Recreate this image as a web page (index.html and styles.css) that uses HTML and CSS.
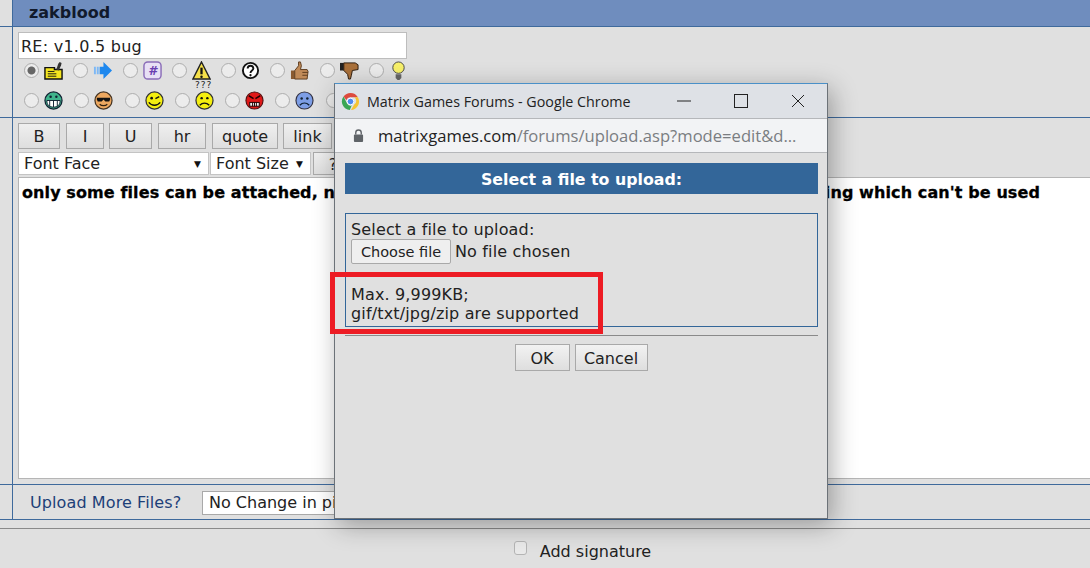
FILE: index.html
```html
<!DOCTYPE html>
<html lang="en">
<head>
<meta charset="utf-8">
<title>Upload</title>
<link rel="stylesheet" href="styles.css">
</head>
<body>
<div class="page">
  <div class="row row-head"><div class="gutter"></div><div class="cell head">zakblood</div></div>
  <div class="row row-subject">
    <div class="gutter"></div>
    <div class="cell subject">
      <input class="subject-input" type="text" value="RE: v1.0.5 bug">
      <div class="icons icons-one">
        <label class="pick"><input type="radio" name="ic" checked>
          <svg viewBox="0 0 20 20"><path d="M1 7h10v2h8v10H1z" fill="#f4e51e" stroke="#111" stroke-width="1.500"/><path d="M4 11h7M4 13.500h9M4 16h9" stroke="#111"/><path d="M13 9l2-6 1.500-2 2 1-.5 2.500-2.500 5.500z" fill="#333"/></svg></label>
        <label class="pick"><input type="radio" name="ic">
          <svg viewBox="0 0 20 20"><path d="M1 6h2v8H1zM4 6h2v8H4z" fill="#7db8f5"/><path d="M7 6h4V1l9 9-9 9v-5H7z" fill="#1e88ee"/></svg></label>
        <label class="pick"><input type="radio" name="ic">
          <svg viewBox="0 0 20 20"><rect x="1" y="1" width="18" height="18" rx="4" fill="#e8e0f5" stroke="#8a6cb8" stroke-width="1.500"/><text x="10" y="15" class="hash">#</text></svg></label>
        <label class="pick"><input type="radio" name="ic">
          <svg viewBox="0 0 20 20"><path d="M10 1l9 18H1z" fill="#f5e04a" stroke="#222" stroke-width="1.500"/><path d="M10 7v7" stroke="#111" stroke-width="2.400"/><circle cx="10" cy="16.500" r="1.300" fill="#111"/></svg></label>
        <label class="pick"><input type="radio" name="ic">
          <svg viewBox="0 0 20 20"><circle cx="10" cy="10" r="8" fill="#fff" stroke="#111" stroke-width="2"/><path d="M7 8c0-4 6-4 6 0 0 2-3 2-3 4.500" fill="none" stroke="#111" stroke-width="2"/><circle cx="10" cy="15" r="1.200" fill="#111"/></svg></label>
        <label class="pick"><input type="radio" name="ic">
          <svg viewBox="0 0 20 20"><path d="M1 10h4v9H1z" fill="#8a5a30"/><path d="M5 10l4-5V1h2l1 4-1 4h7l1 2-1 8H5z" fill="#c08a58" stroke="#5b3a1c"/><path d="M13 12h6M13 15h5" stroke="#5b3a1c"/></svg></label>
        <label class="pick"><input type="radio" name="ic">
          <svg viewBox="0 0 20 20"><path d="M0 2h4v8H0z" fill="#222"/><path d="M4 2h12l3 2v5l-6 1-1 5-1 4H9l-1-5-4-4z" fill="#a9703a" stroke="#2b1a0c"/></svg></label>
        <label class="pick"><input type="radio" name="ic">
          <svg viewBox="0 0 20 20"><circle cx="10" cy="7" r="6" fill="#f7f06a" stroke="#444"/><path d="M7 14h6v4l-2 2H9l-2-2z" fill="#666"/></svg></label>
      </div>
      <div class="icons icons-two">
        <label class="pick"><input type="radio" name="ic">
          <svg viewBox="0 0 20 20"><circle cx="10" cy="10" r="9" fill="#3fb48c" stroke="#123" stroke-width="1.300"/><path d="M3 10h14c0 5-3 7-7 7s-7-2-7-7z" fill="#fff" stroke="#123"/><path d="M6 10v6M10 10v7M14 10v6" stroke="#123"/><circle cx="7" cy="6" r="1.300" fill="#123"/><circle cx="13" cy="6" r="1.300" fill="#123"/></svg></label>
        <label class="pick"><input type="radio" name="ic">
          <svg viewBox="0 0 20 20"><circle cx="10" cy="10" r="9" fill="#eda860" stroke="#432" stroke-width="1.300"/><path d="M3 7h14v2l-1 2h-4l-2-2-2 2H4L3 9z" fill="#111"/><path d="M6 14c2 2 6 2 8 0" fill="none" stroke="#321" stroke-width="1.300"/></svg></label>
        <label class="pick"><input type="radio" name="ic">
          <svg viewBox="0 0 20 20"><circle cx="10" cy="10" r="9" fill="#f4ee10" stroke="#333" stroke-width="1.300"/><circle cx="7" cy="7.500" r="1.400" fill="#111"/><path d="M11 8l4-2" stroke="#111" stroke-width="1.500"/><path d="M4 12c3 4 9 4 12 0" fill="none" stroke="#111" stroke-width="1.500"/></svg></label>
        <label class="pick"><input type="radio" name="ic">
          <span class="query"><span class="marks">???</span>
          <svg viewBox="0 0 20 20"><circle cx="10" cy="10" r="9" fill="#f4ee10" stroke="#333" stroke-width="1.300"/><circle cx="7" cy="7.500" r="1.300" fill="#111"/><circle cx="13" cy="7.500" r="1.300" fill="#111"/><path d="M5 15c3-3 7-3 10 0" fill="none" stroke="#111" stroke-width="1.500"/></svg></span></label>
        <label class="pick"><input type="radio" name="ic">
          <svg viewBox="0 0 20 20"><circle cx="10" cy="10" r="9" fill="#e01818" stroke="#511" stroke-width="1.200"/><path d="M4 5l5 3M16 5l-5 3" stroke="#200" stroke-width="1.600"/><rect x="5" y="12" width="10" height="4" fill="#eee" stroke="#200"/><path d="M8 12v4M10 12v4M12 12v4" stroke="#200"/></svg></label>
        <label class="pick"><input type="radio" name="ic">
          <svg viewBox="0 0 20 20"><circle cx="10" cy="10" r="9" fill="#7d9ee6" stroke="#334" stroke-width="1.200"/><circle cx="7" cy="8" r="1.300" fill="#123"/><circle cx="13" cy="8" r="1.300" fill="#123"/><path d="M5 15c3-3 7-3 10 0" fill="none" stroke="#123" stroke-width="1.400"/></svg></label>
        <label class="pick"><input type="radio" name="ic"></label>
      </div>
    </div>
  </div>
  <div class="row row-editor">
    <div class="gutter"></div>
    <div class="cell editor">
      <div class="tools">
        <button class="tool tool-b">B</button>
        <button class="tool tool-i">I</button>
        <button class="tool tool-u">U</button>
        <button class="tool tool-hr">hr</button>
        <button class="tool tool-quote">quote</button>
        <button class="tool tool-link">link</button>
      </div>
      <div class="selects">
        <div class="drop drop-face">Font Face<span class="caret">▼</span></div>
        <div class="drop drop-size">Font Size<span class="caret">▼</span></div>
        <button class="tool tool-help">?</button>
      </div>
      <div class="body-text">
        <span>only some files can be attached, n</span>
        <span>ing which can't be used</span>
      </div>
    </div>
  </div>
  <div class="row row-upload">
    <div class="gutter"></div>
    <div class="cell upload">
      <span class="upload-label">Upload More Files?</span>
      <div class="drop drop-pic">No Change in pic</div>
    </div>
  </div>
  <div class="rule"></div>
  <div class="signature">
    <input class="sig-check" type="checkbox">
    <span>Add signature</span>
  </div>

  <div class="window">
    <div class="titlebar">
      <svg class="chrome-logo" viewBox="0 0 20 20">
        <path d="M10 1a9 9 0 0 1 7.800 4.500H10a4.500 4.500 0 0 0-4.300 3.100L2.700 4.700A9 9 0 0 1 10 1z" fill="#dd4b3e"/>
        <path d="M17.800 5.500A9 9 0 0 1 10.500 19l3.400-5.800a4.500 4.500 0 0 0 0-7.700z" fill="#f5c431"/>
        <path d="M2.700 4.700L6.500 12.300a4.500 4.500 0 0 0 4.700 2L9.300 19A9 9 0 0 1 2.700 4.700z" fill="#3aa655"/>
        <circle cx="10" cy="10" r="3.500" fill="#4d8bf0" stroke="#fff"/>
      </svg>
      <span class="win-title">Matrix Games Forums - Google Chrome</span>
      <div class="win-controls">
        <svg class="ctl" viewBox="0 0 14 14"><path d="M0 7h14" stroke="#222"/></svg>
        <svg class="ctl" viewBox="0 0 14 14"><rect x="0.500" y="0.500" width="13" height="13" fill="none" stroke="#222"/></svg>
        <svg class="ctl" viewBox="0 0 14 14"><path d="M1 1l12 12M13 1L1 13" stroke="#222"/></svg>
      </div>
    </div>
    <div class="urlbar">
      <svg class="lock" viewBox="0 0 12 14"><path d="M3 6V4a3 3 0 0 1 6 0v2" fill="none" stroke="#5f6368" stroke-width="1.500"/><rect x="1" y="6" width="10" height="8" rx="1" fill="#5f6368"/></svg>
      <span class="url"><span class="url-host">matrixgames.com</span>/forums/upload.asp?mode=edit&amp;d...</span>
    </div>
    <div class="win-body">
      <div class="banner">Select a file to upload:</div>
      <div class="file-box">
        <div>Select a file to upload:</div>
        <div class="file-row"><button class="choose">Choose file</button><span>No file chosen</span></div>
        <div class="limits">Max. 9,999KB;<br>gif/txt/jpg/zip are supported</div>
      </div>
      <div class="win-rule"></div>
      <div class="actions">
        <button class="act act-ok">OK</button>
        <button class="act act-cancel">Cancel</button>
      </div>
    </div>
  </div>
  <div class="mark"></div>
</div>
</body>
</html>
```
FILE: styles.css
```css
* { box-sizing: border-box; }
html, body { margin: 0; padding: 0; }
body { background: #e0e0e0; font-family: "DejaVu Sans", Verdana, sans-serif; font-size: 16px; color: #222; }
.page { position: relative; width: 1090px; height: 568px; overflow: hidden; background: #e0e0e0; }

.row { display: flex; border-bottom: 1px solid #3f6a9c; }
.gutter { width: 13px; flex: none; border-right: 1px solid #3f6a9c; }
.cell { flex: 1; min-width: 0; }
.row-head { height: 27px; }
.row-subject { height: 91px; }
.row-editor { height: 367px; }
.row-upload { height: 35px; }

.head { background: #6f8dbe; padding: 3px 0 0 16px; font-weight: bold; font-size: 16px; line-height: 20px; color: #111a2c; }

.subject { padding: 5px 0 0 5px; }
.subject-input { display: block; width: 389px; height: 27px; padding: 1px 2px 0; border: 1px solid #bdbdbd; background: #fff; font: 16px "DejaVu Sans", sans-serif; letter-spacing: .25px; color: #222; outline: none; }
.icons { display: flex; align-items: center; }
.icons-one { margin: 2px 0 0 6px; gap: 5.300px; }
.icons-two { margin: 11px 0 0 6px; gap: 6.300px; }
.pick { display: flex; align-items: center; gap: 5px; width: 44px; flex: none; }
.pick input { appearance: none; width: 15px; height: 15px; margin: 0; flex: none; border: 1px solid #adadad; border-radius: 50%; background: #ececec; }
.pick input:checked { background: radial-gradient(circle, #666 0 3.500px, #ececec 4.500px); }
.pick svg { width: 19px; height: 19px; flex: none; display: block; }
.hash { font: italic bold 13px "DejaVu Sans", sans-serif; fill: #6a3fb0; text-anchor: middle; }
.query { position: relative; display: block; width: 19px; height: 19px; }
.marks { position: absolute; left: 0; top: -11px; font-size: 9px; line-height: 10px; letter-spacing: 1px; color: #222; }

.editor { padding: 5px 0 5px 5px; display: flex; flex-direction: column; }
.tools { display: flex; height: 26px; }
.tool { height: 26px; padding: 1px 0 0; border: 1px solid #a9a9a9; background: linear-gradient(#efefef, #dedede); font: 16px "DejaVu Sans", sans-serif; color: #222; }
.tool-b { width: 42px; margin-right: 6px; }
.tool-i { width: 38px; margin-right: 5px; }
.tool-u { width: 43px; margin-right: 6px; }
.tool-hr { width: 48px; margin-right: 6px; }
.tool-quote { width: 66px; margin-right: 5px; }
.tool-link { width: 49px; }
.selects { display: flex; margin-top: 3px; height: 23px; }
.drop { display: flex; align-items: center; justify-content: space-between; background: #fff; border: 1px solid #c4c4c4; font-size: 16px; color: #222; }
.drop-face { width: 191px; padding: 0 7px 0 5px; }
.drop-size { width: 101px; margin-left: 1px; padding: 0 7px 0 5px; }
.caret { font-size: 9px; color: #111; }
.tool-help { width: 40px; height: 23px; margin-left: 2px; }
.body-text { flex: 1; margin-top: 2px; display: flex; justify-content: space-between; padding: 6px 50px 0 3px; background: #fff; border: 1px solid #b5b5b5; border-right: 0; font-weight: bold; font-size: 16px; line-height: 18px; letter-spacing: .1px; -webkit-text-stroke: .3px #000; color: #000; }

.upload { display: flex; align-items: center; padding: 1px 0 0 17px; }
.upload-label { width: 172px; flex: none; color: #1d3f78; font-size: 16px; letter-spacing: .1px; }
.drop-pic { width: 200px; height: 24px; padding-left: 6px; white-space: nowrap; justify-content: flex-start; border-color: #a9a9a9; }

.rule { height: 1px; margin-top: 8px; background: #8a8a8a; }
.signature { display: flex; align-items: center; justify-content: center; gap: 13px; height: 39px; padding: 5px 0 0 75px; font-size: 16px; color: #222; }
.sig-check { appearance: none; width: 13px; height: 14px; margin: -6px 0 0; border: 1px solid #b4b4b4; border-radius: 3px; background: #e9e9e9; }

.window { position: absolute; left: 334px; top: 83px; width: 494px; height: 436px; display: flex; flex-direction: column; background: #e0e0e0; border: 1px solid #6c7278; border-top-color: #4a90c8; box-shadow: 4px 6px 24px rgba(0,0,0,.32); }
.titlebar { display: flex; align-items: center; height: 35px; flex: none; padding-left: 6px; background: #dee1e6; border-bottom: 1px solid #b5b7ba; }
.chrome-logo { width: 19px; height: 19px; flex: none; }
.win-title { margin-left: 7px; font-family: "Open Sans", sans-serif; font-size: 14.300px; color: #222; white-space: nowrap; }
.win-controls { display: flex; margin-left: auto; gap: 43px; padding-right: 22px; }
.ctl { width: 14px; height: 14px; display: block; }
.urlbar { display: flex; align-items: center; height: 34px; flex: none; padding-left: 18px; background: #f2f3f5; border-bottom: 1px solid #b5b7ba; }
.lock { width: 11px; height: 13px; flex: none; }
.url { margin-left: 14px; font-family: "Open Sans", sans-serif; font-size: 16.600px; color: #7a7d81; white-space: nowrap; }
.url-host { color: #222; }
.win-body { flex: 1; padding: 10px 9px 0 10px; display: flex; flex-direction: column; }
.banner { height: 31px; padding-top: 1px; background: #336699; color: #fff; font-weight: bold; font-size: 15.800px; line-height: 31px; text-align: center; }
.file-box { height: 114px; margin-top: 19px; padding: 6px 5px 0; border: 1px solid #336699; font-size: 16px; letter-spacing: .15px; line-height: 19px; color: #222; }
.file-row { display: flex; align-items: center; gap: 4px; }
.choose { width: 100px; height: 25px; padding: 0; border: 1px solid #a9a9a9; border-radius: 2px; background: #efefef; font: 14.500px "DejaVu Sans", sans-serif; color: #222; }
.limits { margin-top: 21px; }
.win-rule { height: 1px; margin-top: 8px; background: #8a8a8a; }
.actions { display: flex; justify-content: center; gap: 5px; margin-top: 8px; padding-right: 1px; }
.act { height: 27px; padding: 2px 0 0; border: 1px solid #a9a9a9; background: linear-gradient(#f2f2f2, #dedede); font: 16px "DejaVu Sans", sans-serif; color: #222; }
.act-ok { width: 55px; }
.act-cancel { width: 73px; }

.mark { position: absolute; left: 330px; top: 272px; width: 273px; height: 62px; border: 5px solid #ed1c24; }
```
